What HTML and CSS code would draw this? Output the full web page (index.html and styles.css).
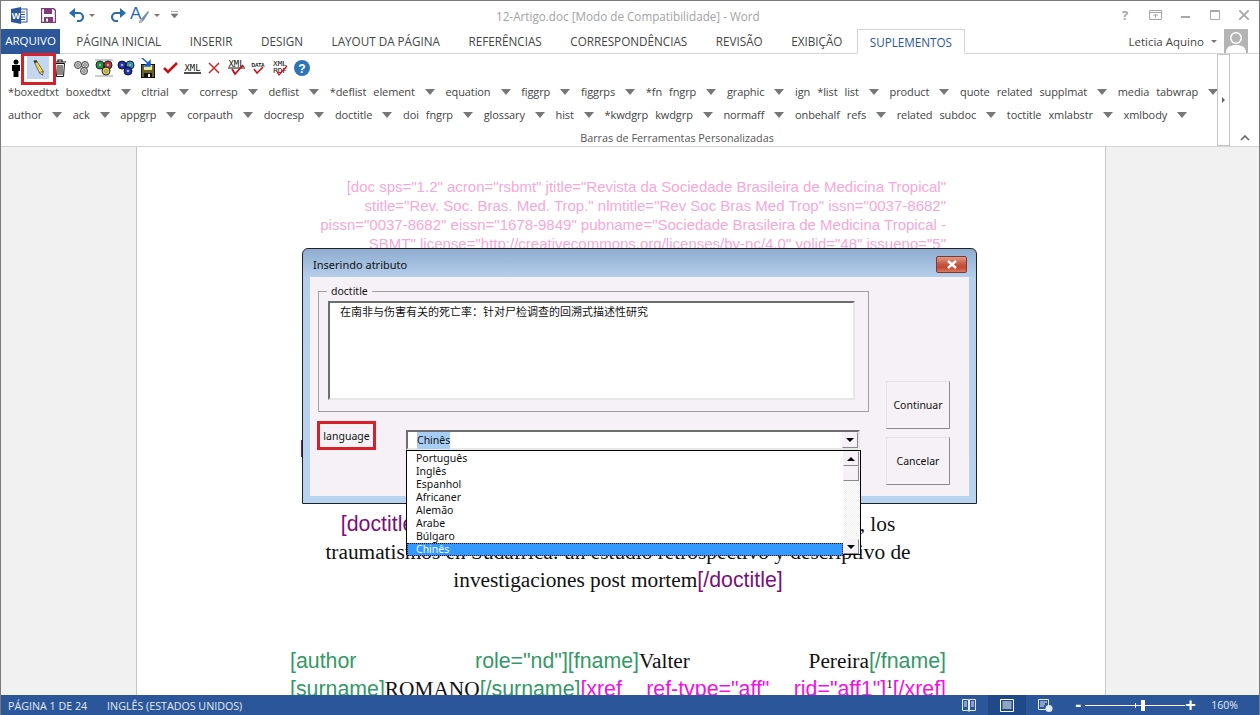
FILE: index.html
```html
<!DOCTYPE html>
<html lang="pt-BR">
<head>
    <meta charset="UTF-8">
    <title>12-Artigo.doc [Modo de Compatibilidade] - Word</title>
    <link rel="stylesheet" href="styles.css">
</head>
<body>
<div class="window">
    <header class="titlebar">
        <div class="qat">
            <svg class="qat-word" width="17" height="17" viewBox="0 0 17 17"><rect x="7" y="2" width="9" height="13" fill="#fff" stroke="#2b579a"/><path d="M9 5h5M9 7.5h5M9 10h5M9 12.5h5" stroke="#2b579a"/><path d="M0 2 10 0v17L0 15z" fill="#2b579a"/><text x="5" y="12" class="qat-w">W</text></svg>
            <svg class="qat-save" width="15" height="15" viewBox="0 0 15 15"><path d="M.5.5h12l2 2v12H.5z" fill="#fff" stroke="#80397b" stroke-width="1.4"/><rect x="3" y="1" width="8" height="5" fill="#80397b"/><rect x="3" y="9" width="9" height="5" fill="#80397b"/><rect x="5" y="10.500" width="2" height="3" fill="#fff"/></svg>
            <svg class="qat-undo" width="16" height="14" viewBox="0 0 16 14"><path d="M3 5h7a4 4 0 0 1 0 8H8" fill="none" stroke="#2b6cb0" stroke-width="2.200"/><path d="M6 0v10L0 5z" fill="#2b6cb0"/></svg>
            <span class="caret caret-small"></span>
            <svg class="qat-redo" width="16" height="14" viewBox="0 0 16 14"><path d="M13 5H6a4 4 0 0 0 0 8h2" fill="none" stroke="#2b6cb0" stroke-width="2.200"/><path d="M10 0v10l6-5z" fill="#2b6cb0"/></svg>
            <svg class="qat-style" width="20" height="20" viewBox="0 0 20 20"><text x="0" y="14" class="qat-a">A</text><path d="M9 18c0-3 2-4 3-5l6-7 1 1-5 8c-1 2-3 3-5 3z" fill="#7a8aa0"/><path d="M9 18l2-4 2 1-2 3z" fill="#b0b8c4"/></svg>
            <span class="caret caret-small"></span>
            <svg class="qat-more" width="7" height="8" viewBox="0 0 7 8"><path d="M0 .5h7M0 3h7L3.500 7z" fill="#777" stroke="#777" stroke-width=".6"/></svg>
        </div>
        <div class="doc-name">12-Artigo.doc [Modo de Compatibilidade] - Word</div>
        <div class="win-controls">
            <span class="win-help">?</span>
            <svg width="13" height="10" viewBox="0 0 13 10"><path d="M.5.500h12v9H.5zM.5 2.500h12M6.500 8V4M4.500 6l2-2 2 2" fill="none" stroke="#a8a8a8"/></svg>
            <svg width="10" height="10" viewBox="0 0 10 10"><path d="M0 7h9" stroke="#a8a8a8" stroke-width="2"/></svg>
            <svg width="10" height="10" viewBox="0 0 10 10"><path d="M.5.500h9v9h-9zM.5 1.500h9" fill="none" stroke="#a8a8a8"/></svg>
            <svg width="10" height="10" viewBox="0 0 10 10"><path d="M0 0l10 10M10 0 0 10" stroke="#a8a8a8" stroke-width="1.800"/></svg>
        </div>
    </header>

    <nav class="tabs">
        <a class="tab tab-file">ARQUIVO</a>
        <div class="tab-list">
            <a class="tab">PÁGINA INICIAL</a>
            <a class="tab">INSERIR</a>
            <a class="tab">DESIGN</a>
            <a class="tab">LAYOUT DA PÁGINA</a>
            <a class="tab">REFERÊNCIAS</a>
            <a class="tab">CORRESPONDÊNCIAS</a>
            <a class="tab">REVISÃO</a>
            <a class="tab">EXIBIÇÃO</a>
            <a class="tab tab-active">SUPLEMENTOS</a>
        </div>
        <div class="account">
            <span>Leticia Aquino</span>
            <span class="caret caret-small"></span>
            <svg class="avatar" width="24" height="24" viewBox="0 0 24 24"><rect width="24" height="24" fill="#b4b4b4"/><circle cx="12" cy="9" r="6" fill="#fff"/><path d="M2 24c0-6 4-8 10-8s10 2 10 8z" fill="#fff"/><circle cx="12" cy="9" r="4.500" fill="#b4b4b4"/></svg>
        </div>
    </nav>

    <section class="ribbon">
        <div class="ribbon-body">
            <div class="icon-row">
                <span class="tool"><svg width="10" height="18" viewBox="0 0 10 18"><circle cx="5" cy="3" r="2.500"/><path d="M1 6h8v6H7.500v6h-5v-6H1z"/></svg></span>
                <span class="tool tool-on"><svg width="11" height="16" viewBox="0 0 14 20"><path d="M1 1l3-1 9 14-1 5-4-3z" fill="#f2d64b" stroke="#333" stroke-width=".8"/><path d="M1 1l3-1 1.500 2.300-3 1.500z" fill="#333"/><path d="M8 16l5-2-1 5z" fill="#e8c9a0" stroke="#333" stroke-width=".6"/></svg></span>
                <span class="tool"><svg width="14" height="18" viewBox="0 0 14 18"><path d="M1 3h12M5 3V1h4v2" fill="none" stroke="#111" stroke-width="1.200"/><path d="M2.500 4.500h9l-1 13h-7z" fill="#fff" stroke="#111"/><path d="M5 6v10M7 6v10M9 6v10" stroke="#111"/></svg></span>
                <span class="tool">
                    <svg width="18" height="16" viewBox="0 0 18 16"><g fill="#d0d0d0" stroke="#444" stroke-width="1"><circle cx="5" cy="5" r="3.500"/><circle cx="12" cy="5" r="3.500"/><circle cx="11" cy="11" r="3.500"/></g><g fill="#fff" stroke="#555" stroke-width=".8"><circle cx="5" cy="5" r="1.300"/><circle cx="12" cy="5" r="1.300"/><circle cx="11" cy="11" r="1.300"/></g></svg>
                </span>
                <span class="tool">
                    <svg width="18" height="18" viewBox="0 0 18 18"><path d="M0 1h18M0 17h18" stroke="#999"/><circle cx="5" cy="6" r="4" fill="#1e9a3c" stroke="#123"/><circle cx="13" cy="6" r="4" fill="#d23030" stroke="#123"/><circle cx="11" cy="12" r="4" fill="#e8d23c" stroke="#123"/><g fill="#fff" stroke="#333" stroke-width=".6"><circle cx="5" cy="6" r="1.300"/><circle cx="13" cy="6" r="1.300"/><circle cx="11" cy="12" r="1.300"/></g></svg>
                </span>
                <span class="tool">
                    <svg width="18" height="16" viewBox="0 0 18 16"><circle cx="5" cy="5" r="4" fill="#1c2fc0" stroke="#113"/><circle cx="13" cy="5" r="4" fill="#2aa0b8" stroke="#113"/><circle cx="11" cy="11" r="4" fill="#1c2fc0" stroke="#113"/><g fill="#fff" stroke="#333" stroke-width=".6"><circle cx="5" cy="5" r="1.300"/><circle cx="13" cy="5" r="1.300"/><circle cx="11" cy="11" r="1.300"/></g></svg>
                </span>
                <span class="tool">
                    <svg width="14" height="20" viewBox="0 0 14 20"><rect x="0.500" y="6.500" width="13" height="13" fill="#6b6324" stroke="#111"/><rect x="3" y="7" width="8" height="5" fill="#efe6a0"/><rect x="3" y="15" width="8" height="4.500" fill="#111"/><rect x="7" y="16" width="2" height="3" fill="#fff"/><path d="M1 0l7 6M9 3v5H4z" fill="#1a5fd0" stroke="#1a5fd0" stroke-width="1.500"/></svg>
                </span>
                <span class="tool"><svg width="15" height="12" viewBox="0 0 15 12"><path d="M1 6l4 4 9-9" fill="none" stroke="#c8101a" stroke-width="2.600"/></svg></span>
                <span class="tool">
                    <svg width="17" height="12" viewBox="0 0 17 12"><text x="8.500" y="8.500" class="tool-text" textLength="16" lengthAdjust="spacingAndGlyphs">XML</text><path d="M0 11h17" stroke="#111" stroke-width="1.500"/></svg>
                </span>
                <span class="tool"><svg width="12" height="12" viewBox="0 0 12 12"><path d="M1 1l10 10M11 1 1 11" stroke="#d2232a" stroke-width="1.500"/></svg></span>
                <span class="tool">
                    <svg width="17" height="16" viewBox="0 0 17 16"><text x="8.500" y="7" class="tool-text" textLength="16" lengthAdjust="spacingAndGlyphs">XML</text><path d="M0 8h17" stroke="#111"/><path d="M4 9l3 5 8-9" fill="none" stroke="#c8101a" stroke-width="1.800"/></svg>
                </span>
                <span class="tool">
                    <svg width="14" height="14" viewBox="0 0 14 14"><text x="7" y="5.500" class="tool-text tool-text-small">DATA</text><path d="M3 8l3 4 6-6" fill="none" stroke="#c8101a" stroke-width="1.500"/></svg>
                </span>
                <span class="tool">
                    <svg width="16" height="17" viewBox="0 0 16 17"><text x="8" y="6.500" class="tool-text tool-text-narrow" textLength="14" lengthAdjust="spacingAndGlyphs">XML</text><text x="8" y="14" class="tool-text tool-text-narrow" textLength="14" lengthAdjust="spacingAndGlyphs">PDF</text><path d="M4 11l3 5 8-9" fill="none" stroke="#c8101a" stroke-width="1.200"/></svg>
                </span>
                <span class="tool">
                    <svg width="16" height="16" viewBox="0 0 16 16"><circle cx="8" cy="8" r="8" fill="#2f74b8"/><text x="8" y="12.500" class="tool-help">?</text></svg>
                </span>
            </div>
            <div class="menu-row">
                <span class="menu-item">*boxedtxt</span>
                <span class="menu-item">boxedtxt<i class="caret"></i></span>
                <span class="menu-item">cltrial<i class="caret"></i></span>
                <span class="menu-item">corresp<i class="caret"></i></span>
                <span class="menu-item">deflist<i class="caret"></i></span>
                <span class="menu-item">*deflist</span>
                <span class="menu-item">element<i class="caret"></i></span>
                <span class="menu-item">equation<i class="caret"></i></span>
                <span class="menu-item">figgrp<i class="caret"></i></span>
                <span class="menu-item">figgrps<i class="caret"></i></span>
                <span class="menu-item">*fn</span>
                <span class="menu-item">fngrp<i class="caret"></i></span>
                <span class="menu-item">graphic<i class="caret"></i></span>
                <span class="menu-item">ign</span>
                <span class="menu-item">*list</span>
                <span class="menu-item">list<i class="caret"></i></span>
                <span class="menu-item">product<i class="caret"></i></span>
                <span class="menu-item">quote</span>
                <span class="menu-item">related</span>
                <span class="menu-item">supplmat<i class="caret"></i></span>
                <span class="menu-item">media</span>
                <span class="menu-item">tabwrap<i class="caret"></i></span>
            </div>
            <div class="menu-row">
                <span class="menu-item">author<i class="caret"></i></span>
                <span class="menu-item">ack<i class="caret"></i></span>
                <span class="menu-item">appgrp<i class="caret"></i></span>
                <span class="menu-item">corpauth<i class="caret"></i></span>
                <span class="menu-item">docresp<i class="caret"></i></span>
                <span class="menu-item">doctitle<i class="caret"></i></span>
                <span class="menu-item">doi</span>
                <span class="menu-item">fngrp<i class="caret"></i></span>
                <span class="menu-item">glossary<i class="caret"></i></span>
                <span class="menu-item">hist<i class="caret"></i></span>
                <span class="menu-item">*kwdgrp</span>
                <span class="menu-item">kwdgrp<i class="caret"></i></span>
                <span class="menu-item">normaff<i class="caret"></i></span>
                <span class="menu-item">onbehalf</span>
                <span class="menu-item">refs<i class="caret"></i></span>
                <span class="menu-item">related</span>
                <span class="menu-item">subdoc<i class="caret"></i></span>
                <span class="menu-item">toctitle</span>
                <span class="menu-item">xmlabstr<i class="caret"></i></span>
                <span class="menu-item">xmlbody<i class="caret"></i></span>
            </div>
            <div class="group-label">Barras de Ferramentas Personalizadas</div>
        </div>
        <div class="ribbon-scroll"><i class="scroll-arrow"></i></div>
        <div class="ribbon-end">
            <svg width="10" height="6" viewBox="0 0 10 6"><path d="M1 5l4-4 4 4" fill="none" stroke="#666" stroke-width="1.600"/></svg>
        </div>
        <span class="mark mark-tool"></span>
    </section>

    <main class="workspace">
        <article class="page">
            <p class="doc-attrs">[doc sps="1.2" acron="rsbmt" jtitle="Revista da Sociedade Brasileira de Medicina Tropical"<br>stitle="Rev. Soc. Bras. Med. Trop." nlmtitle="Rev Soc Bras Med Trop" issn="0037-8682"<br>pissn="0037-8682" eissn="1678-9849" pubname="Sociedade Brasileira de Medicina Tropical -<br>SBMT" license="http://creativecommons.org/licenses/by-nc/4.0" volid="48" issueno="5"</p>
            <h1 class="doc-title"><span class="tag-purple">[doctitle]</span>Mortalidad relacionada con las lesiones y accidente, los<br>traumatismos en Sudáfrica: un estudio retrospectivo y descriptivo de<br>investigaciones post mortem<span class="tag-purple">[/doctitle]</span></h1>
            <div class="author-line"><span class="tag-green">[author</span> <span class="tag-green">role="nd"][fname]</span>Valter <span>Pereira<span class="tag-green">[/fname]</span></span></div>
            <div class="author-line"><span><span class="tag-green">[surname]</span>ROMANO<span class="tag-green">[/surname]</span><span class="tag-pink">[xref</span></span> <span class="tag-pink">ref-type="aff"</span> <span><span class="tag-pink">rid="aff1"]</span><sup>1</sup><span class="tag-pink">[/xref]</span></span></div>
        </article>
    </main>

    <footer class="statusbar">
        <div class="status-left">
            <span>PÁGINA 1 DE 24</span>
            <span>INGLÊS (ESTADOS UNIDOS)</span>
        </div>
        <div class="status-right">
            <span class="view-btn"><svg width="14" height="13" viewBox="0 0 14 13"><path d="M.5.500h6v11h-6zM7.500.500h6v11h-6zM2 3h3M2 5h3M2 7h3M9 3h3M9 5h3M9 7h3M7 11v2" fill="none" stroke="#e4eaf3"/></svg></span>
            <span class="view-btn view-on"><svg width="14" height="13" viewBox="0 0 14 13"><path d="M.5.500h13v12H.5zM2.500 3h9M2.500 5h9M2.500 7h9M2.500 9h9" fill="none" stroke="#fff"/></svg></span>
            <span class="view-btn"><svg width="15" height="13" viewBox="0 0 15 13"><path d="M.5.500h10v10H.5zM2 3h7M2 5h5M2 7h4" fill="none" stroke="#e4eaf3"/><circle cx="11" cy="9.500" r="3.500" fill="#e4eaf3"/></svg></span>
            <div class="zoom-ctl">
                <span class="zoom-sign">-</span>
                <div class="zoom-track"><i class="zoom-mid"></i><i class="zoom-thumb"></i></div>
                <span class="zoom-sign">+</span>
            </div>
            <span class="zoom-value">160%</span>
        </div>
    </footer>

    <div class="dialog">
        <div class="dialog-title">
            <span>Inserindo atributo</span>
            <span class="dialog-close"><svg width="12" height="9" viewBox="0 0 12 9"><path d="M2 1l8 7M10 1 2 8" stroke="#fff" stroke-width="2.400"/></svg></span>
        </div>
        <div class="dialog-client">
            <div class="dialog-main">
                <fieldset class="field-frame">
                    <legend>doctitle</legend>
                    <div class="field-text">在南非与伤害有关的死亡率：针对尸检调查的回溯式描述性研究</div>
                </fieldset>
                <div class="lang-row">
                    <label class="lang-label">language</label>
                    <div class="combo">
                        <span class="combo-value"><span class="combo-sel">Chinês</span></span>
                        <span class="sb-btn combo-btn"><i class="sb-down"></i></span>
                        <div class="combo-list">
                            <ul class="lang-items">
                                <li>Português</li>
                                <li>Inglês</li>
                                <li>Espanhol</li>
                                <li>Africaner</li>
                                <li>Alemão</li>
                                <li>Arabe</li>
                                <li>Búlgaro</li>
                                <li class="lang-selected">Chinês</li>
                            </ul>
                            <div class="list-scroll">
                                <span class="sb-btn"><i class="sb-up"></i></span>
                                <span class="sb-btn sb-thumb"></span>
                                <span class="sb-track"></span>
                                <span class="sb-btn"><i class="sb-down"></i></span>
                            </div>
                        </div>
                    </div>
                </div>
            </div>
            <div class="dialog-buttons">
                <button class="dlg-btn">Continuar</button>
                <button class="dlg-btn">Cancelar</button>
            </div>
        </div>
    </div>
    <span class="page-tick"></span>
</div>
</body>
</html>
```
FILE: styles.css
```css
* {
    box-sizing: border-box;
}

body {
    margin: 0;
    background-color: #fff;
}

.window {
    position: relative;
    width: 1260px;
    height: 715px;
    display: flex;
    flex-direction: column;
    overflow: hidden;
    border: 1px solid #7a7a7a;
    border-bottom: none;
    font-family: "Open Sans", sans-serif;
    color: #444;
}

/* title bar */
.titlebar {
    position: relative;
    height: 28px;
    flex: none;
    display: flex;
    align-items: center;
    justify-content: space-between;
}

.qat {
    display: flex;
    align-items: center;
    padding-left: 10px;
}

.qat-save {
    margin-left: 13px;
}

.qat-undo {
    margin-left: 13px;
}

.qat-redo {
    margin-left: 15px;
}

.qat-style {
    margin-left: 4px;
}

.qat-more {
    margin-left: 11px;
}

.qat .caret-small {
    margin-left: 4px;
}

.qat-w {
    font: bold 9px "Liberation Sans", sans-serif;
    fill: #fff;
    text-anchor: middle;
}

.qat-a {
    font: 17px "Liberation Sans", sans-serif;
    fill: #2b6cb0;
}

.doc-name {
    position: absolute;
    left: 495px;
    top: 7px;
    font-size: 11.700px;
    color: #a3a3a3;
}

.win-controls {
    display: flex;
    align-items: center;
    gap: 19px;
    padding-right: 10px;
}

.win-help {
    font: bold 13px "Open Sans", sans-serif;
    color: #a8a8a8;
    width: 8px;
}

/* tabs */
.tabs {
    height: 25px;
    flex: none;
    display: flex;
    border-bottom: 1px solid #d4d4d4;
    font-size: 11.700px;
}

.tab {
    padding: 0 14.300px;
    line-height: 24px;
    color: #444;
    white-space: nowrap;
}

.tab-file {
    width: 59px;
    padding: 0;
    height: 25px;
    text-align: center;
    background-color: #2b579a;
    color: #fff;
    font-size: 11.500px;
}

.tab-list {
    display: flex;
    padding-left: 2px;
}

.tab-active {
    height: 25px;
    padding: 0 12px;
    border: 1px solid #d4d4d4;
    border-bottom-color: #fff;
    color: #2b579a;
    background-color: #fff;
}

.account {
    margin-left: auto;
    display: flex;
    align-items: center;
    gap: 7px;
    padding-right: 11px;
    font-size: 11.500px;
    color: #444;
}

.caret {
    display: inline-block;
    width: 0;
    height: 0;
    border-left: 5px solid transparent;
    border-right: 5px solid transparent;
    border-top: 6px solid #777;
}

.caret-small {
    border-left-width: 3px;
    border-right-width: 3px;
    border-top-width: 3px;
}

/* ribbon */
.ribbon {
    position: relative;
    height: 93px;
    flex: none;
    display: flex;
    border-bottom: 1px solid #d4d4d4;
}

.ribbon-body {
    width: 1216px;
    overflow: hidden;
    display: flex;
    flex-direction: column;
}

.icon-row {
    height: 26px;
    flex: none;
    display: flex;
    padding: 2px 0 0 4px;
}

.tool {
    width: 22px;
    height: 23px;
    display: flex;
    align-items: center;
    justify-content: center;
}

.tool-on {
    background-color: #c5d7ee;
}

.tool-text {
    font: 8px "DejaVu Sans Mono", monospace;
    fill: #111;
    text-anchor: middle;
}

.tool-text-narrow {
    font-size: 7px;
}

.tool-text-small {
    font: bold 5px "Liberation Sans", sans-serif;
}

.tool-help {
    font: bold 12px "Liberation Sans", sans-serif;
    fill: #fff;
    text-anchor: middle;
}

.menu-row {
    height: 23px;
    flex: none;
    display: flex;
    align-items: center;
    gap: 7px;
    padding-left: 7px;
    font-size: 11px;
    letter-spacing: -0.100px;
    color: #444;
    white-space: nowrap;
}

.menu-item {
    display: flex;
    align-items: center;
}

.menu-item .caret {
    margin: 0 3.700px 0 10px;
}

.group-label {
    margin-top: 5px;
    text-align: center;
    font-size: 10.800px;
    color: #555;
    line-height: 14px;
    padding-left: 136px;
}

.ribbon-scroll {
    width: 13px;
    border: 1px solid #c6c6c6;
    display: flex;
    align-items: center;
    justify-content: center;
}

.scroll-arrow {
    width: 0;
    height: 0;
    border-top: 3px solid transparent;
    border-bottom: 3px solid transparent;
    border-left: 3px solid #666;
}

.ribbon-end {
    flex: 1;
    display: flex;
    align-items: flex-end;
    justify-content: center;
    padding-bottom: 5px;
}

.mark {
    position: absolute;
    border: 3px solid #d7202a;
}

.mark-tool {
    left: 20px;
    top: -1px;
    width: 35px;
    height: 32px;
}

/* document */
.workspace {
    flex: 1;
    overflow: hidden;
    background-color: #f1f1f1;
    padding-left: 135px;
}

.page {
    width: 970px;
    height: 100%;
    padding: 30px 159px 0 153px;
    background-color: #fff;
    border-left: 1px solid #c6c6c6;
    border-right: 1px solid #c6c6c6;
    font-family: "Liberation Serif", serif;
    color: #111;
}

.doc-attrs {
    margin: 0;
    text-align: right;
    font: 15px/19px "Liberation Sans", sans-serif;
    color: #f8a8d6;
    white-space: nowrap;
}

.doc-title {
    margin: 257px 0 53px;
    text-align: center;
    font-size: 21.330px;
    font-weight: normal;
    line-height: 28px;
    white-space: nowrap;
}

.tag-purple,
.tag-green,
.tag-pink {
    font-family: "Liberation Sans", sans-serif;
}

.tag-purple {
    color: #7b0f7b;
}

.tag-green {
    color: #339966;
}

.tag-pink {
    color: #f010e8;
}

.author-line {
    font-size: 21.330px;
    line-height: 28px;
    text-align: justify;
    text-align-last: justify;
    white-space: nowrap;
}

.author-line sup {
    font-size: 13px;
    line-height: 0;
}

/* status bar */
.statusbar {
    height: 20px;
    flex: none;
    display: flex;
    justify-content: space-between;
    align-items: center;
    background-color: #2b579a;
    color: #e4eaf3;
    font-size: 10.700px;
}

.status-left {
    display: flex;
    gap: 20px;
    padding: 1px 0 0 7px;
}

.status-right {
    display: flex;
    align-items: center;
    height: 100%;
}

.view-btn {
    height: 100%;
    width: 38px;
    display: flex;
    align-items: center;
    justify-content: center;
    margin-left: 12px;
}

.view-btn:first-child {
    width: 14px;
}

.view-on {
    background-color: #1f4a87;
}

.view-btn:nth-child(3) {
    width: 15px;
}

.zoom-ctl {
    display: flex;
    align-items: center;
    margin-left: 21px;
}

.zoom-sign {
    width: 8px;
    text-align: center;
    font: bold 18px/16px "Liberation Sans", sans-serif;
    color: #fff;
}

.zoom-track {
    position: relative;
    width: 100px;
    height: 1px;
    margin-left: 3px;
    background-color: #fff;
}

.zoom-mid {
    position: absolute;
    left: 50px;
    top: -2px;
    width: 1px;
    height: 5px;
    background-color: #fff;
}

.zoom-thumb {
    position: absolute;
    left: 56px;
    top: -5px;
    width: 4px;
    height: 11px;
    background-color: #fff;
}

.zoom-value {
    margin: 0 21px 0 18px;
    font-size: 10.500px;
}

/* dialog */
.dialog {
    position: absolute;
    left: 301px;
    top: 247px;
    width: 675px;
    height: 256px;
    padding: 0 7px 7px;
    display: flex;
    flex-direction: column;
    border: 1px solid #222;
    border-radius: 6px 6px 0 0;
    background: linear-gradient(#8fadd0, #b6cfec 29px, #b9d4f0 100%);
    font-family: "Noto Sans", sans-serif;
    font-size: 10.500px;
    color: #111;
}

.dialog-title {
    height: 28px;
    flex: none;
    display: flex;
    align-items: center;
    justify-content: space-between;
    padding: 3px 2px 0 3px;
    font-size: 11px;
}

.dialog-close {
    width: 31px;
    height: 17px;
    display: flex;
    align-items: center;
    justify-content: center;
    border: 1px solid #7c3a30;
    border-radius: 2px;
    background: linear-gradient(#e09a88, #c6553f 50%, #c24a36 70%, #d77a5e);
}

.dialog-client {
    flex: 1;
    display: flex;
    background-color: #f5f1f6;
    padding: 9px 0 0 8px;
    gap: 17px;
}

.dialog-main {
    width: 551px;
}

.field-frame {
    height: 126px;
    margin: 0;
    padding: 0 13px 12px 9px;
    border: 1px solid #a0a0a0;
    display: block;
}

.field-frame legend {
    margin-left: -1px;
    padding: 0 4px;
    line-height: 1;
}

.field-text {
    height: 99px;
    padding: 1px 10px;
    margin-top: 4px;
    background-color: #fff;
    border: 2px solid #e6e6e6;
    border-top-color: #6e6e6e;
    border-left-color: #6e6e6e;
    font-family: "Noto Sans CJK SC", sans-serif;
    font-size: 11px;
    line-height: 14px;
}

.lang-row {
    display: flex;
    margin-top: 9px;
}

.lang-label {
    width: 59px;
    height: 29px;
    margin-left: -1px;
    border: 3px solid #d7202a;
    text-align: center;
    line-height: 25px;
}

.combo {
    position: relative;
    width: 454px;
    height: 20px;
    margin: 9px 0 0 30px;
    display: flex;
    background-color: #fff;
    border: 2px solid #e8e8e8;
    border-top-color: #6e6e6e;
    border-left-color: #6e6e6e;
}

.combo-value {
    flex: 1;
    padding-left: 9px;
    line-height: 17px;
}

.combo-sel {
    background-color: #a8cef5;
    display: inline-block;
}

.combo-list {
    position: absolute;
    left: -2px;
    top: 18px;
    width: 455px;
    height: 105px;
    display: flex;
    background-color: #fff;
    border: 1px solid #000;
}

.lang-items {
    flex: 1;
    margin: 0;
    padding: 1px 0 0;
    list-style: none;
    line-height: 13px;
}

.lang-items li {
    padding-left: 9px;
    height: 13px;
}

.lang-selected {
    background-color: #3399ff;
    color: #fff;
    outline: 1px dotted #111;
    outline-offset: -1px;
}

.list-scroll {
    width: 17px;
    display: flex;
    flex-direction: column;
    background: repeating-conic-gradient(#f0f0f0 0 25%, #fff 0 50%) 0 0 / 2px 2px;
}

.sb-btn {
    width: 16px;
    height: 15px;
    flex: none;
    display: flex;
    align-items: center;
    justify-content: center;
    background-color: #f5f1f6;
    border: 1px solid #f5f1f6;
    border-right-color: #8a8a8a;
    border-bottom-color: #8a8a8a;
}

.combo-btn {
    height: 16px;
}

.sb-thumb {
    height: 15px;
}

.sb-track {
    flex: 1;
}

.sb-up,
.sb-down {
    width: 0;
    height: 0;
    border-left: 4px solid transparent;
    border-right: 4px solid transparent;
}

.sb-up {
    border-bottom: 4px solid #000;
}

.sb-down {
    border-top: 4px solid #000;
}

.dialog-buttons {
    display: flex;
    flex-direction: column;
    gap: 8px;
    padding-top: 95px;
}

.dlg-btn {
    width: 64px;
    height: 48px;
    padding: 0;
    background-color: #f5f1f6;
    border: 1px solid #e6e2e8;
    border-right-color: #8a8a8a;
    border-bottom-color: #8a8a8a;
    font-family: "Noto Sans", sans-serif;
    font-size: 10.500px;
    color: #111;
}

.page-tick {
    position: absolute;
    left: 300px;
    top: 439px;
    width: 1px;
    height: 17px;
    background-color: #7b0f7b;
}
```
